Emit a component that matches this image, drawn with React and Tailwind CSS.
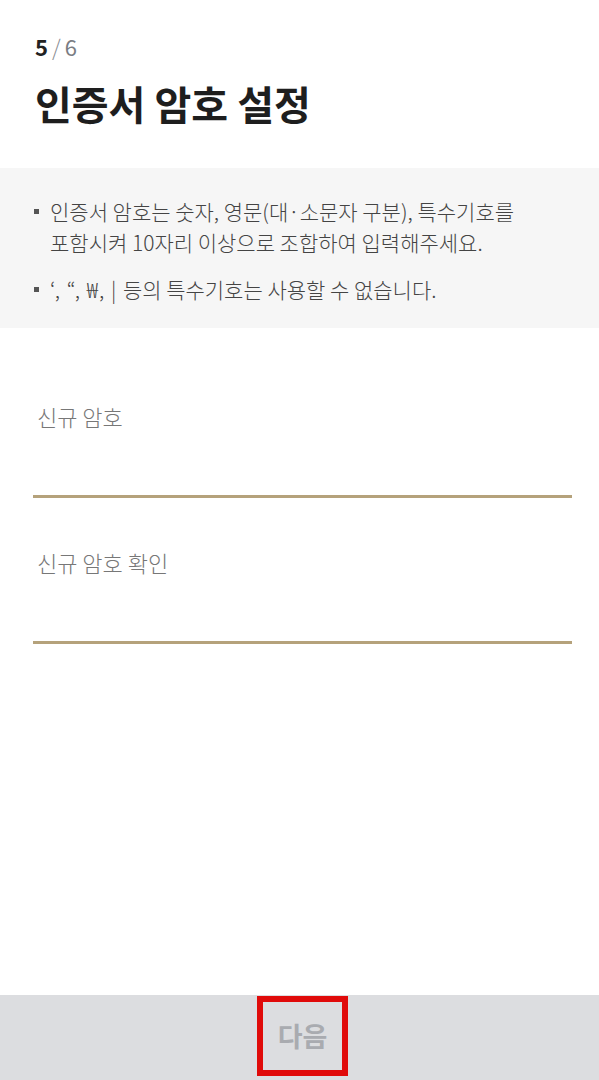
const App = () => {
  const notes = [
    "인증서 암호는 숫자, 영문(대·소문자 구분), 특수기호를 포함시켜 10자리 이상으로 조합하여 입력해주세요.",
    <>
      <span className="tracking-[1px]">‘, “, ₩, | </span>등의 특수기호는 사용할 수 없습니다.
    </>,
  ];

  return (
    <div
      className="relative flex flex-col h-[1080px] bg-white text-[#222]"
      style={{ fontFamily: '"Noto Sans CJK KR", "Noto Sans", sans-serif' }}
    >
      {/* step + title */}
      <div className="px-[35px] pt-[32px]">
        <p className="text-[22px] leading-[28px]">
          <span className="font-bold text-[#222]">5</span>
          <span className="mx-[4px] text-[#8a8d93] font-light">/</span>
          <span className="text-[#7a7d83]">6</span>
        </p>
        <h1 className="mt-[19px] text-[40px] leading-[48px] font-bold text-[#1e1e1e]">
          인증서 암호 설정
        </h1>
      </div>

      {/* notice */}
      <div className="mt-[41px] bg-[#f6f6f6] px-[34px] pt-[28px] h-[160px]">
        <ul className="space-y-[16px]">
          {notes.map((t, i) => (
            <li key={i} className="flex gap-[11px] text-[21px] leading-[31px] text-[#444] font-light">
              <span className="mt-[13px] w-[5px] h-[5px] bg-[#555] shrink-0"></span>
              <span className="max-w-[480px]">{t}</span>
            </li>
          ))}
        </ul>
      </div>

      {/* inputs */}
      <div className="pl-[33px] pr-[27px]">
        <div className="pt-[73px]">
          <label className="block text-[22px] leading-[30px] text-[#777] font-light px-[4px]">신규 암호</label>
          <div className="h-[67px] border-b-[3px] border-[#b5a27b]"></div>
        </div>
        <div className="pt-[49px]">
          <label className="block text-[22px] leading-[30px] text-[#777] font-light px-[4px]">신규 암호 확인</label>
          <div className="h-[67px] border-b-[3px] border-[#b5a27b]"></div>
        </div>
      </div>

      {/* bottom button */}
      <div className="mt-auto h-[85px] bg-[#dcdde0] flex items-start justify-center">
        <button className="ml-[6px] mt-[1px] w-[91px] h-[80px] border-[6px] border-[#e00a0a] text-[27px] font-bold text-[#a9abb0] flex items-center justify-center">
          다음
        </button>
      </div>
    </div>
  );
};

export default App;
